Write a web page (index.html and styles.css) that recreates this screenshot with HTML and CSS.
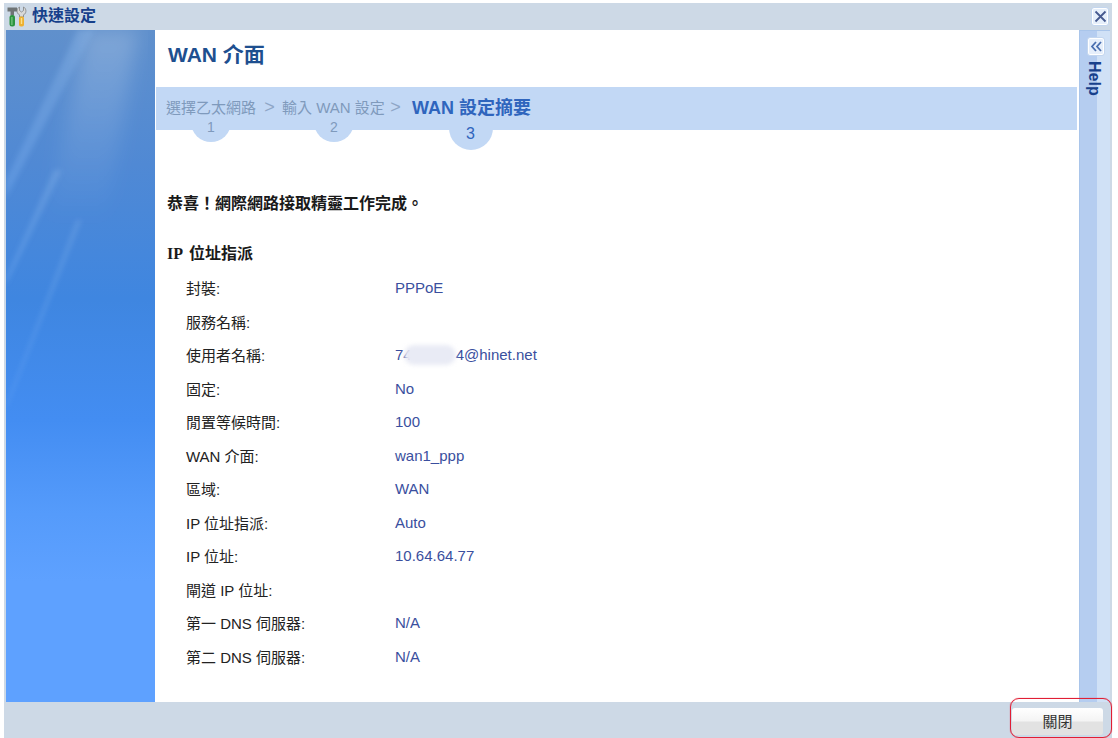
FILE: index.html
```html
<!DOCTYPE html>
<html lang="zh-Hant">
<head>
<meta charset="utf-8">
<title>快速設定</title>
<link rel="stylesheet" href="styles.css">
</head>
<body>
<div class="window">
  <header class="titlebar">
    <svg class="title-icon" width="21" height="21" viewBox="0 0 21 21">
      <path d="M0.500 1.500h9.500v4H7v4H3.500v-4H.5z" fill="#6f7475"/>
      <rect x="2.500" y="9" width="5.500" height="11.500" rx="2.500" fill="#2c9440"/>
      <rect x="4.300" y="11" width="1.200" height="8" fill="#7cc986"/>
      <path d="M12.500 1v3.500l2 1.500 2-1.500V1c2.500 1 3.300 5 1.300 7l-1.300.8V11h-4V8.800L11.200 8C9.200 6 10 2 12.500 1z" fill="#d8d8d6" stroke="#77797a" stroke-width=".7"/>
      <rect x="12" y="10.500" width="5" height="10" rx="1.800" fill="#eeb02f"/>
      <rect x="13.800" y="12" width="1.400" height="6" fill="#fbe08c"/>
    </svg>
    <span class="title-text">快速設定</span>
    <button class="close-btn" aria-label="關閉">
      <svg width="13" height="13" viewBox="0 0 13 13"><path d="M1.500 1.500l10 10M11.500 1.500l-10 10" stroke="#46598f" stroke-width="1.800" fill="none"/></svg>
    </button>
  </header>
  <div class="body">
    <aside class="sidebar">
      <svg class="sidebar-art" width="149" height="672" viewBox="0 0 149 672">
        <defs>
          <linearGradient id="glow" x1="0" y1="0" x2="0" y2="1">
            <stop offset="0" stop-color="#fff" stop-opacity=".2"/>
            <stop offset="1" stop-color="#fff" stop-opacity="0"/>
          </linearGradient>
          <linearGradient id="ray" x1="1" y1="0" x2="0" y2="1">
            <stop offset="0" stop-color="#9cc4f2" stop-opacity=".25"/>
            <stop offset="1" stop-color="#7fb4f5" stop-opacity=".3"/>
          </linearGradient>
          <filter id="soft"><feGaussianBlur stdDeviation="2.500"/></filter>
          <filter id="softer"><feGaussianBlur stdDeviation="9"/></filter>
        </defs>
        <path d="M80 0h52L100 190H40z" fill="url(#glow)" filter="url(#softer)"/>
        <path d="M88 0L0 168V150L72 0z" fill="url(#ray)" filter="url(#soft)"/>
        <path d="M56 140L0 255v-8l48-107z" fill="url(#ray)" filter="url(#soft)"/>
        <path d="M76 190L0 380v-6l70-184z" fill="url(#ray)" filter="url(#soft)" opacity=".8"/>
      </svg>
    </aside>
    <main class="content">
      <h1 class="page-title">WAN 介面</h1>
      <nav class="steps">
        <div class="step step-one"><span class="step-label">選擇乙太網路</span><b class="num">1</b></div>
        <i class="chev">&gt;</i>
        <div class="step step-two"><span class="step-label">輸入 WAN 設定</span><b class="num">2</b></div>
        <i class="chev">&gt;</i>
        <div class="step current"><span class="step-label">WAN 設定摘要</span><b class="num">3</b></div>
      </nav>
      <p class="congrats">恭喜！網際網路接取精靈工作完成。</p>
      <h2 class="section">IP 位址指派</h2>
      <dl class="rows">
        <dt>封裝:</dt><dd>PPPoE</dd>
        <dt>服務名稱:</dt><dd></dd>
        <dt>使用者名稱:</dt><dd class="user">74<span class="blur"></span>4@hinet.net</dd>
        <dt>固定:</dt><dd>No</dd>
        <dt>閒置等候時間:</dt><dd>100</dd>
        <dt>WAN 介面:</dt><dd>wan1_ppp</dd>
        <dt>區域:</dt><dd>WAN</dd>
        <dt>IP 位址指派:</dt><dd>Auto</dd>
        <dt>IP 位址:</dt><dd>10.64.64.77</dd>
        <dt>閘道 IP 位址:</dt><dd></dd>
        <dt>第一 DNS 伺服器:</dt><dd>N/A</dd>
        <dt>第二 DNS 伺服器:</dt><dd>N/A</dd>
      </dl>
    </main>
    <aside class="help">
      <button class="help-btn" aria-label="展開">
        <svg width="13" height="11" viewBox="0 0 13 11"><path d="M6 1L2 5.500 6 10M11 1L7 5.500 11 10" stroke="#4a6fb0" stroke-width="1.800" fill="none"/></svg>
      </button>
      <span class="help-text">Help</span>
    </aside>
  </div>
  <footer class="footer">
    <button class="close-main">關閉</button>
    <span class="callout"></span>
  </footer>
</div>
</body>
</html>
```
FILE: styles.css
```css
* { box-sizing: border-box; }
html, body { margin: 0; height: 100%; background: #fff; overflow: hidden; }
body { padding: 3px 6px 0 4px; font-family: "Liberation Sans", "Noto Sans CJK TC", sans-serif; font-size: 15px; color: #222; }
.window { height: 735px; display: flex; flex-direction: column; background: #cdd9e6; }
.titlebar { height: 27px; flex: none; display: flex; align-items: center; padding: 0 3px 1px 3px; }
.title-icon { flex: none; margin-right: 4px; }
.title-text { font-size: 16px; font-weight: 700; color: #17408b; line-height: 1; }
.close-btn { margin-left: auto; width: 18px; height: 19px; padding: 0; display: flex; align-items: center; justify-content: center; background: #e6effb; border: 1px solid #c3d6ef; border-radius: 3px; box-shadow: inset 0 0 0 1px #fff; }
.body { flex: 1; min-height: 0; display: flex; padding-left: 2px; }
.sidebar { width: 149px; flex: none; overflow: hidden; background: linear-gradient(180deg, #6090cc 0%, #5089d4 20%, #3f86e0 40%, #438df2 58%, #559bfb 72%, #5ea1ff 82%, #5ea1ff 100%); }
.sidebar-art { display: block; }
.content { flex: 1; min-width: 0; background: #fff; padding-left: 1px; }
.page-title { margin: 0; height: 57px; padding: 10px 0 0 12px; font-size: 21px; line-height: 30px; font-weight: 700; color: #1e4f8f; }
.steps { height: 43px; width: 921px; background: #c2d8f5; display: flex; align-items: flex-start; padding: 10px 0 0 10px; color: #7f9abc; font-size: 15px; line-height: 21px; }
.step { position: relative; white-space: nowrap; }
.step-label { position: relative; z-index: 1; }
.step-one { width: 90px; }
.step-two { width: 100px; margin-left: -1px; }
.chev { font-style: normal; width: 27px; text-align: center; font-size: 18px; color: #8ea6c6; }
.num { position: absolute; left: 50%; top: 5px; width: 40px; height: 40px; margin-left: -20px; border-radius: 50%; background: #c2d8f5; font-weight: 400; font-size: 14px; line-height: 14px; padding-top: 18px; text-align: center; color: #7f9abc; }
.step-two .num { margin-left: -18px; }
.current { color: #2f65bd; font-size: 18px; font-weight: 700; margin-left: 3px; line-height: 22px; }
.current .num { top: 9px; width: 44px; height: 44px; margin-left: -23px; color: #2f65bd; font-size: 16px; line-height: 16px; padding-top: 20px; }
.congrats { margin: 63px 0 0 11px; font-size: 16px; line-height: 21px; font-weight: 700; color: #1a1a1a; }
.section { margin: 29px 0 0 11px; font-family: "Liberation Serif", "Noto Sans CJK TC", serif; font-size: 16px; line-height: 21px; font-weight: 700; word-spacing: 3px; color: #1a1a1a; }
.rows { margin: 7px 0 0 30px; display: grid; grid-template-columns: 209px 1fr; grid-auto-rows: 33.5px; align-items: center; font-size: 15px; }
.rows dt { color: #222; }
.rows dd { margin: 0; color: #3a4f9e; }
.user { display: flex; align-items: center; }
.blur { width: 52px; height: 20px; margin-left: -8px; border-radius: 10px; background: #e9ebf5; filter: blur(2px); }
.help { width: 31px; margin-right: 2px; flex: none; background: linear-gradient(90deg, #b5cdf0 0 17px, #d0e1f6 17px 100%); border: 1px solid #a9c5ea; border-width: 1px 0 0 1px; padding: 6px 0 0 7px; display: flex; flex-direction: column; align-items: flex-start; }
.help-btn { width: 18px; height: 19px; padding: 0; display: flex; align-items: center; justify-content: center; background: #e6effb; border: 1px solid #c3d6ef; border-radius: 3px; box-shadow: inset 0 0 0 1px #fff; }
.help-text { writing-mode: vertical-rl; margin: 5px 0 0 -2px; font-size: 16px; font-weight: 700; line-height: 18px; color: #17408b; }
.footer { height: 36px; flex: none; position: relative; display: flex; justify-content: flex-end; padding: 6px 9px 2px 0; }
.close-main { width: 91px; height: 27px; padding: 0 0 3px; border: 0; border-radius: 3px; background: linear-gradient(180deg, #ffffff 0%, #f4f4f4 48%, #e2e2e2 52%, #e2e2e2 100%); font-family: inherit; font-size: 15px; color: #333; }
.callout { position: absolute; right: 0; top: -4px; width: 102px; height: 40px; border: 1px solid #e01f35; border-radius: 9px; box-shadow: 0 0 1px #e8263c; }
```
